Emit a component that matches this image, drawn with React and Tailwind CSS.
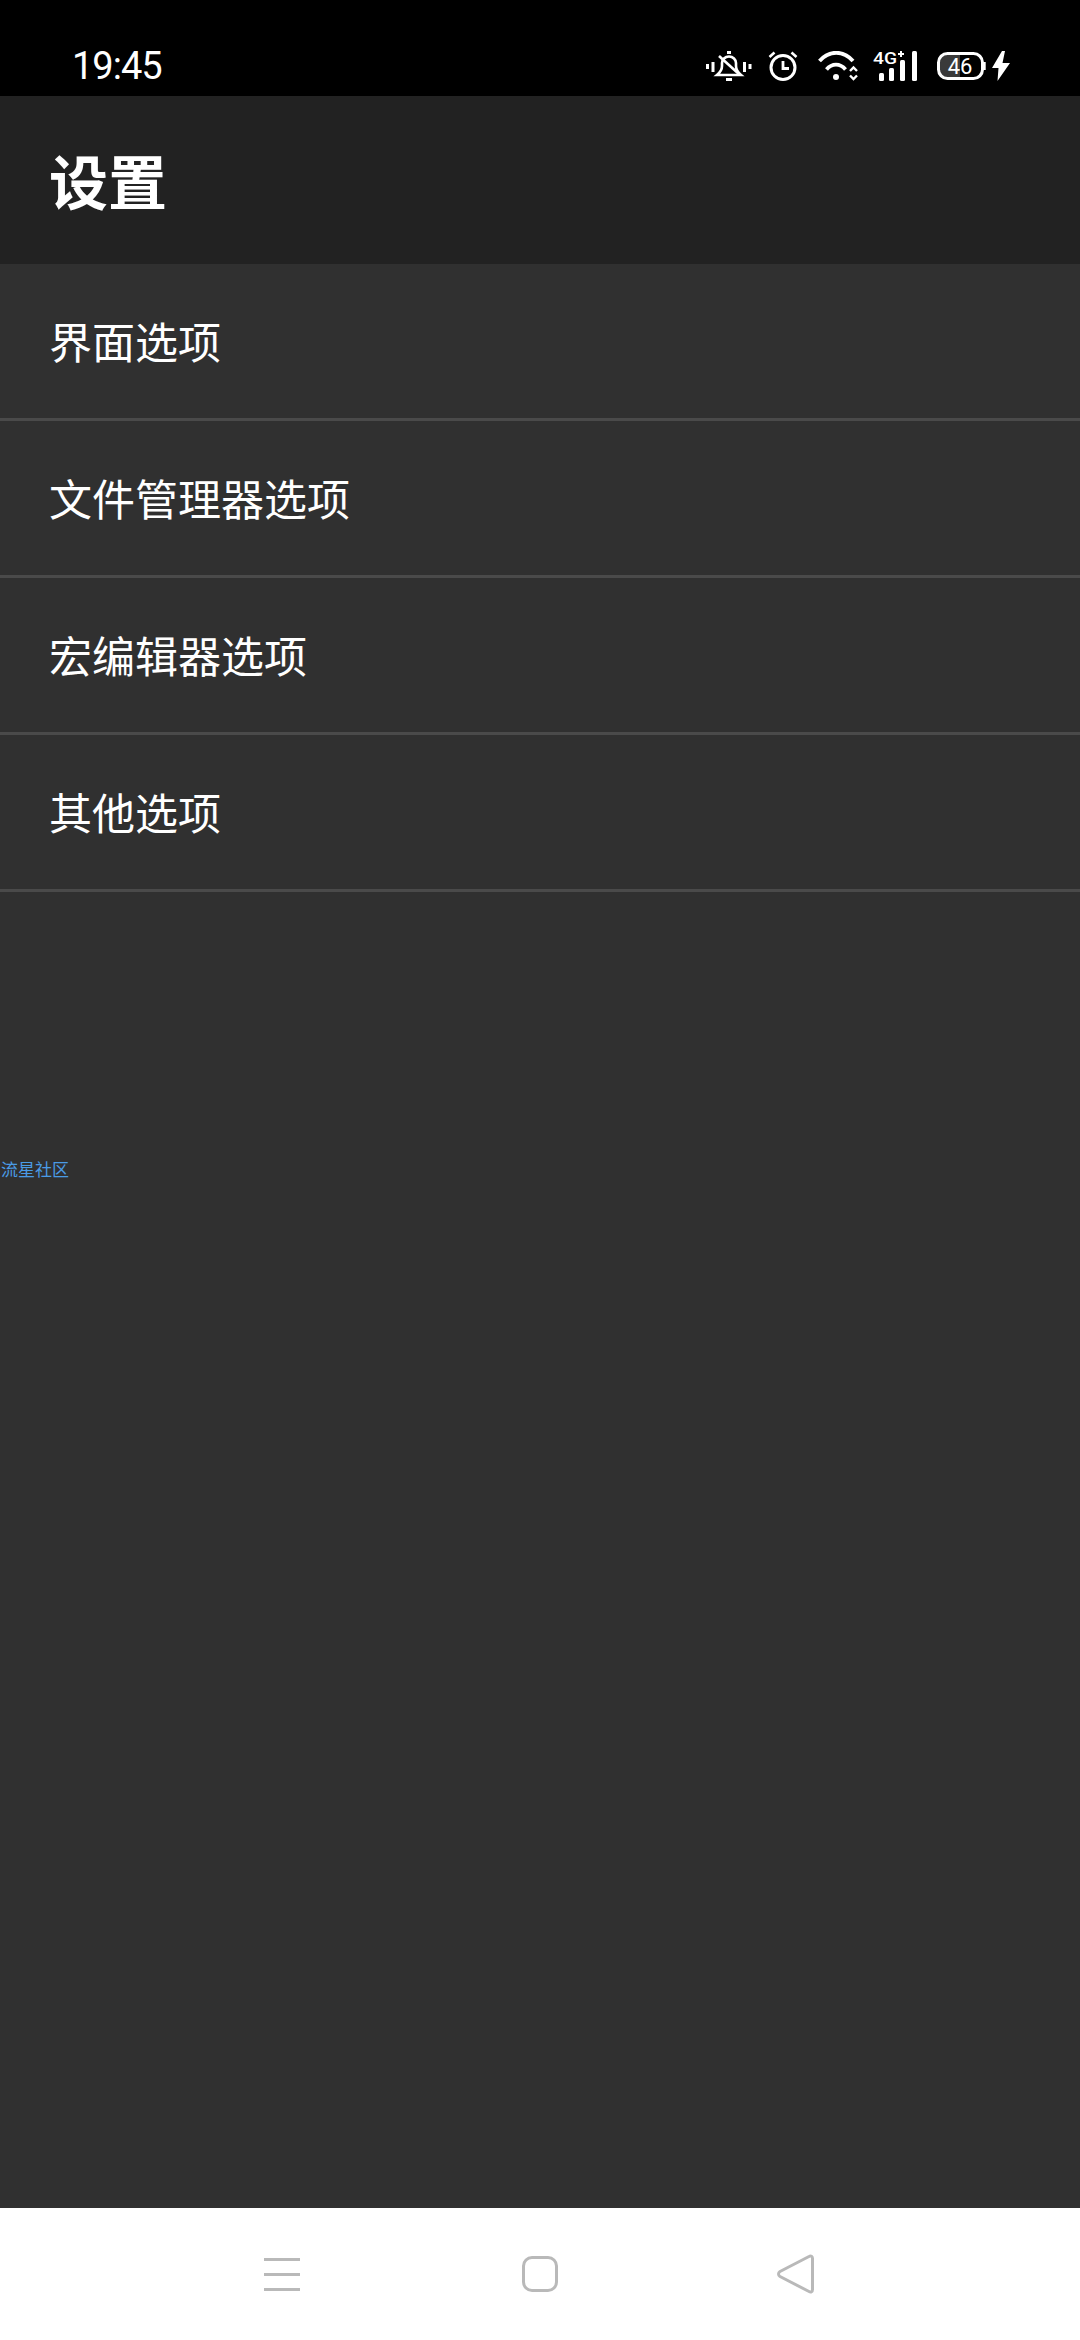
const items = ["界面选项", "文件管理器选项", "宏编辑器选项", "其他选项"];

function BellOff() {
  return (
    <svg width="46" height="30" viewBox="0 0 46 30" fill="none" stroke="white" strokeWidth="3">
      <path d="M1.500 13v5M7 11v10M38.500 11v10M44 13v5" />
      <path d="M11 24h24c-3-2.500-5-5-5-9v-3c0-3.500-3-6.500-7-6.500s-7 3-7 6.500v3c0 4-2 6.500-5 9z" strokeWidth="2.600" />
      <path d="M13 5l21 19" strokeWidth="2.600" />
      <path d="M20 28.500h6" />
      <path d="M21 1.500h4" />
    </svg>
  );
}

function Alarm() {
  return (
    <svg width="30" height="30" viewBox="0 0 30 30" fill="none" stroke="white" strokeWidth="3">
      <circle cx="15" cy="16.500" r="12" />
      <path d="M15 10v7.500h6" strokeWidth="2.800" />
      <path d="M1.500 6l5-4.500M28.500 6l-5-4.500" strokeWidth="2.600" />
    </svg>
  );
}

function Wifi() {
  return (
    <svg width="40" height="30" viewBox="0 0 40 30" fill="none" stroke="white">
      <path d="M1.500 10c9.500-11 24-11 33.500 0" strokeWidth="3.800" />
      <path d="M8.500 18.500c5.500-6.500 13.500-6.500 19 0" strokeWidth="3.800" />
      <circle cx="18" cy="26" r="3" fill="white" stroke="none" />
      <path d="M32 20l3.500-3.500 3.500 3.500M32 24.500l3.500 3.500 3.500-3.500" strokeWidth="2.400" />
    </svg>
  );
}

function Signal() {
  return (
    <svg className="overflow-visible" width="45" height="30" viewBox="0 0 45 30" fill="white">
      <text x="0" y="13" fontSize="17" fontWeight="500" fontFamily="Roboto, sans-serif" textLength="24" lengthAdjust="spacingAndGlyphs">4G</text>
      <path d="M25 3h6M28 0v6" stroke="white" strokeWidth="2" />
      <rect x="6" y="22" width="5" height="8" rx="1.500" />
      <rect x="16" y="17" width="5" height="13" rx="1.500" />
      <rect x="27" y="9" width="5" height="21" rx="1.500" />
      <rect x="39" y="0" width="5" height="30" rx="1.500" />
    </svg>
  );
}

function Battery() {
  return (
    <svg width="49" height="28" viewBox="0 0 49 28" fill="none">
      <path d="M9 3h14v22H9a6 6 0 0 1-6-6V9a6 6 0 0 1 6-6z" fill="#3a3a3a" />
      <rect x="1.500" y="1.500" width="44" height="25" rx="9" stroke="white" strokeWidth="3" />
      <path d="M47.500 10v8" stroke="white" strokeWidth="2.400" />
      <text x="23" y="22" textAnchor="middle" fontSize="22" fontFamily="Roboto, sans-serif" fill="white">46</text>
    </svg>
  );
}

function Bolt() {
  return (
    <svg width="18" height="30" viewBox="0 0 18 30" fill="white">
      <path d="M10 0L0 17h6.500L5.500 30 18 12h-7.500L13 0z" />
    </svg>
  );
}

function StatusBar() {
  return (
    <div className="h-[96px] bg-black flex items-center pt-[36px] pl-[72px] pr-[70px] justify-between">
      <span className="text-white text-[38px] leading-none font-['Roboto',sans-serif] tracking-[-1px]">19:45</span>
      <div className="flex items-center">
        <div className="mr-[16px]"><BellOff /></div>
        <div className="mr-[20px]"><Alarm /></div>
        <div className="mr-[15px]"><Wifi /></div>
        <div className="mr-[19px]"><Signal /></div>
        <div className="mr-[6px]"><Battery /></div>
        <Bolt />
      </div>
    </div>
  );
}

function NavBar() {
  return (
    <div className="h-[132px] bg-white flex items-center pl-[264px]">
      <div className="flex flex-col gap-[12px] w-[36px]">
        <div className="h-[3px] bg-[#b9b9b9]" />
        <div className="h-[3px] bg-[#b9b9b9]" />
        <div className="h-[3px] bg-[#b9b9b9]" />
      </div>
      <div className="ml-[222px] w-[36px] h-[36px] rounded-[10px] border-[3px] border-[#b9b9b9]" />
      <svg className="ml-[219px]" width="37" height="40" viewBox="0 0 37 40" fill="none" stroke="#b9b9b9" strokeWidth="3" strokeLinejoin="round">
        <path d="M32 2.500c2-1.200 3.500 0 3.500 2v31c0 2-1.500 3.200-3.500 2L3 22.500c-2-1.400-2-3.600 0-5z" />
      </svg>
    </div>
  );
}

export default function App() {
  return (
    <div className="w-[1080px] h-[2340px] flex flex-col bg-[#303030] font-['Noto_Sans_CJK_SC',sans-serif]">
      <StatusBar />
      <div className="h-[168px] bg-[#222222] flex items-center pl-[49px] pb-[2px] shrink-0">
        <h1 className="text-white text-[59px] font-bold leading-none">设置</h1>
      </div>
      <div className="flex-1">
        {items.map((item) => (
          <div key={item} className="h-[157px] border-b-[3px] border-[#4a4a4a] flex items-center pl-[49px] pb-[2px] text-white text-[43px] leading-none">
            {item}
          </div>
        ))}
        <div className="mt-[268px] pl-[1px] text-[17px] leading-none text-[#4a9be6]">流星社区</div>
      </div>
      <NavBar />
    </div>
  );
}
